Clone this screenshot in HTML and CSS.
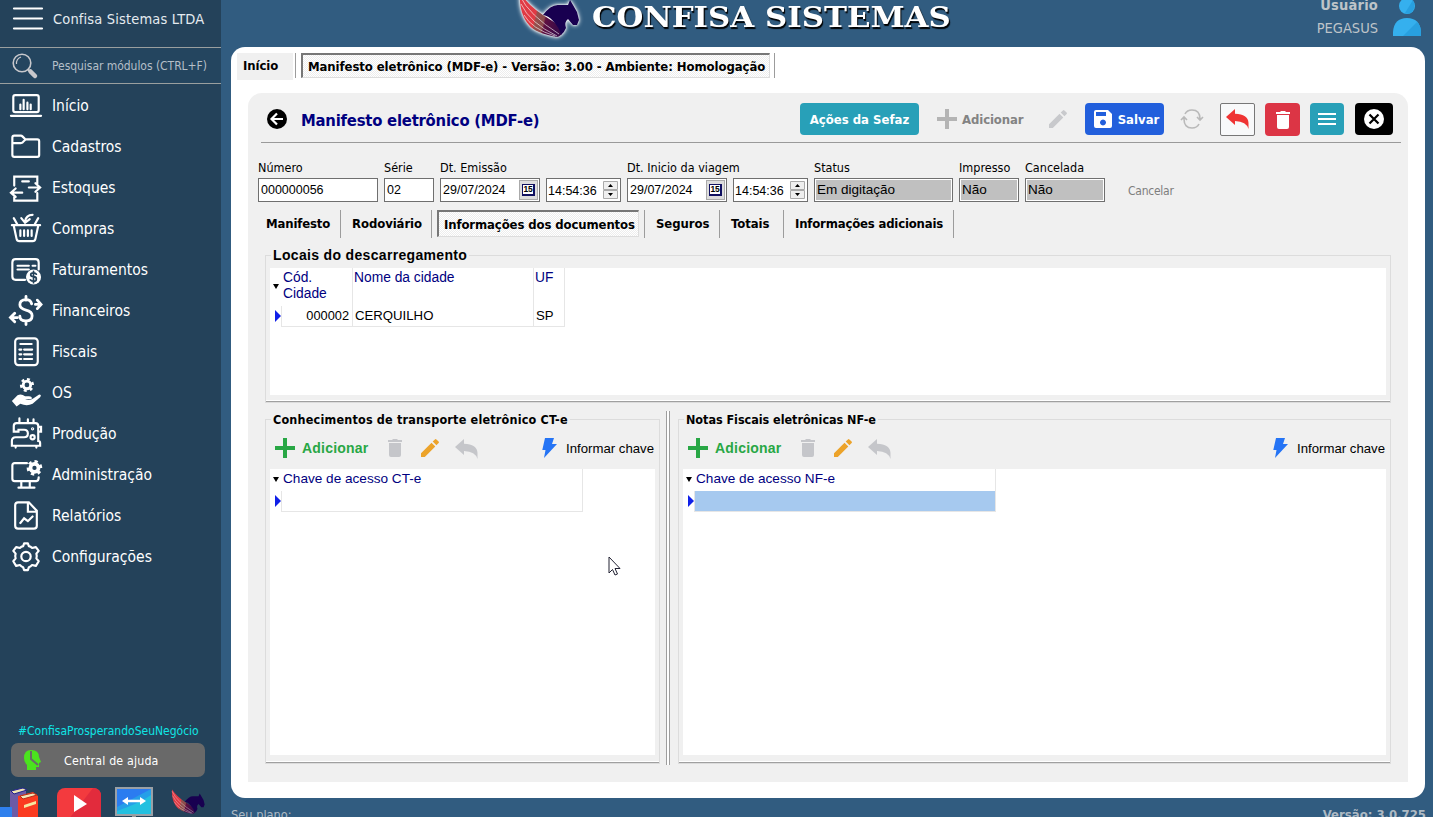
FILE: index.html
```html
<!DOCTYPE html>
<html lang="pt-BR">
<head>
<meta charset="utf-8">
<title>Manifesto eletrônico (MDF-e)</title>
<link rel="stylesheet" href="styles.css">
</head>
<body>
<svg class="defs" aria-hidden="true">
  <linearGradient id="wing" x1="0" y1="0" x2="1" y2=".25">
    <stop offset=".46" stop-color="#e03a44"/><stop offset=".5" stop-color="#94504c"/><stop offset=".68" stop-color="#8a4a4c"/><stop offset=".72" stop-color="#5f1040"/><stop offset="1" stop-color="#3c0a48"/>
  </linearGradient>
  <symbol id="plus" viewBox="0 0 20 20"><path d="M8 0h4v8h8v4h-8v8H8v-8H0V8h8z" fill="currentColor"/></symbol>
  <symbol id="trash" viewBox="0 0 14 18"><path d="M0 1h4l1-1h4l1 1h4v2H0zM1 4h12v12q0 2-2 2H3q-2 0-2-2z" fill="currentColor"/></symbol>
  <symbol id="pencil" viewBox="0 0 18 18"><path d="M0 14.300 10.500 3.700l3.800 3.800L3.800 18H0zM11.700 2.600 13.900.400q.8-.7 1.500 0l2.200 2.200q.7.800 0 1.500l-2.200 2.200z" fill="currentColor"/></symbol>
  <symbol id="undo" viewBox="0 0 23 21"><path d="M0 8 9 0v4.800Q22 5 22.500 14v6q-2-7.500-13.500-8v4z" fill="currentColor"/></symbol>
  <symbol id="bolt" viewBox="0 0 15 20"><path d="M3 0h9L10 6h5L2 20l1.500-8H.3z" fill="currentColor"/></symbol>
  <symbol id="pegasus" viewBox="0 -8 62 47">
    <path d="M3-7C2 8 6 18 12 25q6 8 28 12 4-1 5-4l-5-9-14-9Q12 6 3-7z" fill="url(#wing)"/>
    <path d="M3-4q9 19 39 38M4 4q9 19 36 32M7 15q8 14 31 21" fill="none" stroke="#fff" stroke-width=".7" stroke-opacity=".85"/>
    <path d="M26 15Q34 4 42 5h9l2-5 3 5 4 7 2 8-2 5h-4l-5-6q-4 3-2 9-2 5-5 7-2-8-8-14-4-5-10-6z" fill="#180050"/>
  </symbol>
</svg>
<div class="app">
  <aside class="sidebar">
    <div class="company">
      <svg width="30" height="24" viewBox="0 0 30 24"><path d="M1 1.500h28M1 11.500h28M1 21.500h28" stroke="#fff" stroke-width="2.200" stroke-linecap="round"/></svg>
      <span class="company-name">Confisa Sistemas LTDA</span>
    </div>
    <div class="search">
      <svg width="26" height="26" viewBox="0 0 26 26" fill="none" stroke="#c8c8cc"><circle cx="10" cy="10" r="8.800" stroke-width="1.600"/><path d="M4.500 11Q4 6 9 4" stroke-width="1.200"/><path d="m15.500 16 2 2" stroke-width="2"/><path d="m18.500 18.500 4.500 4.500" stroke-width="4.500" stroke-linecap="round"/></svg>
      <span>Pesquisar módulos (CTRL+F)</span>
    </div>
    <nav class="menu">
      <a class="item"><svg viewBox="0 0 34 32"><rect x="3.500" y="5" width="27" height="18" rx="2"/><path d="M1 27h32" /><path d="M11 15v5M14.500 10v10M18.500 13v7M22 15v5"/></svg><span>Início</span></a>
      <a class="item"><svg viewBox="0 0 34 32"><path d="M2.500 6.500q0-2 2-2h7q1 0 2 1l3 3H29q2 0 2 2V25q0 2-2 2H4.500q-2 0-2-2zM2.500 12.500h9q2 0 3-2l2-2" /></svg><span>Cadastros</span></a>
      <a class="item"><svg viewBox="0 0 34 32"><path d="M4.500 14V4.500H29V12M29 22v8H4.500v-4M13 9.500h7M20 16h11M27 11.500l5 4.500-5 4.500M13 21.500H2M6 17l-5 4.500L6 26"/></svg><span>Estoques</span></a>
      <a class="item"><svg viewBox="0 0 34 32"><path d="M2 12.500h30M4 13l3 14q.5 2.500 3 2.500h14q2.500 0 3-2.500l3-14M11 18v6M15 18v6M19 18v6M23 18v6M4 5l4 7M30 5l-4 7"/><path d="M24 1.500q-7 0-8 7M12 5l4 5 5-4"/></svg><span>Compras</span></a>
      <a class="item"><svg viewBox="0 0 34 32"><path d="M16 27H6q-3.500 0-3.500-3.500v-15Q2.500 5 6 5h21q3.500 0 3.500 3.500V16M8 12h12M24 12h3M8 16h12"/><circle cx="25" cy="24" r="8" class="solid" stroke="none"/><path class="dark" d="M28 21q-1-1.500-3-1.500c-4 0-4 4 0 4s4 5 0 5q-2 0-3.500-1.500M25 18v12"/></svg><span>Faturamentos</span></a>
      <a class="item"><svg viewBox="0 0 34 32"><path stroke-width="3" d="M23 9q-1-4.500-6-4.500-6.500 0-6.500 5.500 0 4 6.500 5.500 6.500 1.500 6.500 6 0 5.500-6.500 5.500T10.500 22M17 1v4M17 27v4"/><path stroke-width="3" d="M27 9.500h5M29 5l4 4.500-4 4.500M8 23.500H2M5 19l-4.500 4.500L5 28"/></svg><span>Financeiros</span></a>
      <a class="item"><svg viewBox="0 0 34 32"><rect x="5.500" y="2" width="24" height="28.500" rx="3.500"/><path d="M11 8h12M10 14h2M15 14h8.500M10 19h2M15 19h8.500M10 24h2M15 24h8.500"/></svg><span>Fiscais</span></a>
      <a class="item"><svg viewBox="0 0 34 32"><circle cx="18" cy="8" r="4" stroke-width="3"/><path class="teeth" stroke-width="3" stroke-dasharray="3 3.280" d="M18 2a6 6 0 1 1-.01 0"/><path class="solid" stroke="none" d="m2 25 6-6q4-2 8 1h4q4 0 3 3h-7q5 2 9-1l6-4q3 0 1 3l-8 7q-6 3-13 0l-4 3z"/></svg><span>OS</span></a>
      <a class="item"><svg viewBox="0 0 34 32"><path d="M4 14V8q0-3 3-3h20q3 0 3 3v16q2 0 2 2v3H2v-5q0-4 4-4h9q4 0 4-4t-4-4H9v2zM10 0v5M19 1v4M25 1v4M30 9h3v5h-3M6 30v1M28 30v1"/><circle cx="24" cy="11" r=".6"/><circle cx="24" cy="20" r="2.200"/></svg><span>Produção</span></a>
      <a class="item"><svg viewBox="0 0 34 32"><path d="M18 4H5Q2.500 4 2.500 6.500v14Q2.500 23 5 23h23q2.500 0 2.500-4M12 23v6M21 23v6M9 30h17"/><circle cx="26" cy="9" r="4.300" stroke-width="4"/><path class="teeth" stroke-width="3" stroke-dasharray="3.500 3.620" d="M26 2.200a6.800 6.800 0 1 1-.01 0"/></svg><span>Administração</span></a>
      <a class="item"><svg viewBox="0 0 34 32"><path d="M5.500 5q0-3 3-3H20l8.500 9v16q0 3-3 3h-17q-3 0-3-3zM19 2v10h9M11 24l4-5 4 3 5-5"/></svg><span>Relatórios</span></a>
      <a class="item"><svg viewBox="0 0 34 32"><circle cx="17" cy="16" r="5"/><path d="m14 5 1-3h4l1 3q2 .5 3.500 2l4-1 3 4-2.500 3q1 3 0 5l2.500 3-3 5-4-1q-1.500 2-3.500 2.500l-1 3h-4l-1-3q-2-.5-3.500-2.500l-4 1-3-5L6 18q-1-2 0-5l-2.500-3 3-4 4 1Q12 5.500 14 5z" stroke-linejoin="round"/></svg><span>Configurações</span></a>
    </nav>
    <div class="slogan">#ConfisaProsperandoSeuNegócio</div>
    <div class="help"><svg width="19" height="20" viewBox="0 0 19 20"><path d="M8 0Q1 0 1 8q0 4 3 7v5h9v-3h3v-4l2-1-2-5Q16 0 8 0z" fill="#4be31e"/><path d="M8 1v8l7 6" fill="none" stroke="#696969" stroke-width="2"/></svg><span>Central de ajuda</span></div>
    <div class="dock">
      <svg class="books" width="38" height="30" viewBox="0 0 38 30"><path d="m10 4 12-3 4 2v27H10z" fill="#6d5aa5"/><path d="m11 4 12-3 4 2-13 4z" fill="#f0e3b2" stroke="#20208c"/><path d="M18 9 33 5l5 4v21H18z" fill="#fb3b20"/><path d="m20 9 13-3 4 2-14 4z" fill="#f2e8b8" stroke="#b52e18"/><path d="m24 18 12-4v3l-12 4z" fill="#f6e7a0"/><path d="M0 20h12v10H0z" fill="#2f80ed"/></svg>
      <svg class="tube" width="44" height="30" viewBox="0 0 44 30"><rect y="1" width="44" height="36" rx="8" fill="#f33a3e"/><path d="M44 37V9q0-8-8-8L8 37z" fill="#e22b3c"/><path d="M17 8v17l13-8z" fill="#fff"/></svg>
      <svg class="remote" width="38" height="30" viewBox="0 0 38 30"><rect x="1" y="1" width="36" height="27" fill="#269fe8" stroke="#9aa0a6" stroke-width="2"/><path d="M2 2h34L2 20z" fill="#2b7cf0"/><path d="M2 24Q25 16 36 8v19H2z" fill="#23c0e0"/><path d="M17 28h4v2h-4z" fill="#999"/><path d="M12 14h14" stroke="#fff" stroke-width="2.500"/><path d="m7 14 6-4v8zM31 14l-6-4v8z" fill="#fff"/></svg>
      <svg class="pega" width="35" height="26"><use href="#pegasus"/></svg>
    </div>
  </aside>
  <main class="main">
    <header class="top">
      <div class="brand"><svg class="brand-mark" width="62" height="47"><use href="#pegasus"/></svg><span>CONFISA SISTEMAS</span></div>
      <div class="user">
        <div class="user-text"><b>Usuário</b><span>PEGASUS</span></div>
        <svg width="28" height="37" viewBox="0 0 28 37"><circle cx="14" cy="6" r="8" fill="#35b0ee"/><path d="M20 0q3 7-1 12-3 3-7 1z" fill="#28a0e0"/><path d="M0 36V32Q1 18 14 18t14 14v4z" fill="#35b0ee"/><path d="M24 22q4 4 4 10v4H10z" fill="#28a0e0"/></svg>
      </div>
    </header>
    <section class="window">
      <div class="tabs window-tabs">
        <span class="tab home">Início</span><i class="sep"></i><span class="tab active doc">Manifesto eletrônico (MDF-e) - Versão: 3.00 - Ambiente: Homologação</span><i class="sep"></i>
      </div>
      <div class="page">
        <div class="titlebar">
          <svg class="back" width="20" height="20" viewBox="0 0 20 20"><circle cx="10" cy="10" r="10"/><path d="M16 10H5M10 4.500 4.500 10l5.500 5.500" fill="none" stroke="#fff" stroke-width="2.200"/></svg>
          <h1>Manifesto eletrônico (MDF-e)</h1>
          <div class="actions">
            <button class="btn sefaz">Ações da Sefaz</button>
            <span class="add off"><svg width="20" height="20"><use href="#plus"/></svg><b>Adicionar</b></span>
            <svg class="edit-off" width="18" height="18"><use href="#pencil"/></svg>
            <button class="btn save"><svg width="18" height="18" viewBox="0 0 18 18"><path fill="#fff" fill-rule="evenodd" d="M2 0h12l4 4v12q0 2-2 2H2q-2 0-2-2V2q0-2 2-2zm0 2v4h10V2zm7 7.500a3 3 0 1 0 .01 0z"/></svg><b>Salvar</b></button>
            <svg class="refresh" width="22" height="20" viewBox="0 0 22 20" fill="none" stroke="#b9b9b9" stroke-width="1.600"><path d="M4 5q2-4 7-4 8 0 8 9M18 15q-2 4-7 4-8 0-8-9M0 11l3-3 3 3M16 8l3 3 3-3"/></svg>
            <button class="btn undo"><svg width="23" height="21"><use href="#undo"/></svg></button>
            <button class="btn del"><svg width="14" height="18"><use href="#trash"/></svg></button>
            <button class="btn more"><svg width="18" height="12" viewBox="0 0 18 12"><path d="M0 1h18M0 6h18M0 11h18" stroke="#fff" stroke-width="2"/></svg></button>
            <button class="btn close"><svg width="20" height="20" viewBox="0 0 20 20"><circle cx="10" cy="10" r="10" fill="#fff"/><path d="m5.500 5.500 9 9m0-9-9 9" stroke="#000" stroke-width="2.200"/></svg></button>
          </div>
        </div>
        <div class="form">
          <label class="w120">Número<span class="in">000000056</span></label>
          <label class="w50">Série<span class="in">02</span></label>
          <label class="w100">Dt. Emissão<span class="in">29/07/2024<i class="cal"><b>15</b></i></span></label>
          <label class="w75"><span class="in time">14:54:36<i class="spin"><svg width="15" height="18" viewBox="0 0 15 18"><path d="M.5.500h14v8H.5zM.5 9.500h14v8H.5z" fill="#efefef" stroke="#aaa"/><path d="m5 6 2.500-3L10 6zM5 12h5l-2.500 3z"/></svg></i></span></label>
          <label class="w100 nowrap">Dt. Inicio da viagem<span class="in">29/07/2024<i class="cal"><b>15</b></i></span></label>
          <label class="w75"><span class="in time">14:54:36<i class="spin"><svg width="15" height="18" viewBox="0 0 15 18"><path d="M.5.500h14v8H.5zM.5 9.500h14v8H.5z" fill="#efefef" stroke="#aaa"/><path d="m5 6 2.500-3L10 6zM5 12h5l-2.500 3z"/></svg></i></span></label>
          <label class="w140">Status<span class="in ro">Em digitação</span></label>
          <label class="w60">Impresso<span class="in ro">Não</span></label>
          <label class="w80">Cancelada<span class="in ro">Não</span></label>
          <span class="cancel">Cancelar</span>
        </div>
        <div class="tabs sub">
          <span class="tab t1">Manifesto</span><i class="sep"></i><span class="tab t2">Rodoviário</span><i class="sep"></i><span class="tab active t3">Informações dos documentos</span><i class="sep"></i><span class="tab t4">Seguros</span><i class="sep"></i><span class="tab t5">Totais</span><i class="sep"></i><span class="tab t6">Informações adicionais</span><i class="sep"></i>
        </div>
        <section class="group places">
          <h2 class="sans">Locais do descarregamento</h2>
          <div class="grid-area">
            <div class="row head"><i class="mark"></i><span class="c1">Cód.<br>Cidade</span><span class="c2">Nome da cidade</span><span class="c3">UF</span></div>
            <div class="row body"><i class="ptr"></i><span class="c1">000002</span><span class="c2">CERQUILHO</span><span class="c3">SP</span></div>
          </div>
        </section>
        <div class="split">
          <section class="group cte">
            <h2>Conhecimentos de transporte eletrônico CT-e</h2>
            <div class="tools">
              <span class="add"><svg width="20" height="20"><use href="#plus"/></svg><b>Adicionar</b></span>
              <svg class="t-del" width="14" height="18"><use href="#trash"/></svg>
              <svg class="t-edit" width="18" height="18"><use href="#pencil"/></svg>
              <svg class="t-undo" width="23" height="21"><use href="#undo"/></svg>
              <span class="key"><svg width="15" height="20"><use href="#bolt"/></svg>Informar chave</span>
            </div>
            <div class="grid-area">
              <div class="row khead"><i class="mark"></i><span>Chave de acesso CT-e</span></div>
              <div class="row kbody"><i class="ptr"></i><span></span></div>
            </div>
          </section>
          <div class="splitter"></div>
          <section class="group nfe">
            <h2>Notas Fiscais eletrônicas NF-e</h2>
            <div class="tools">
              <span class="add"><svg width="20" height="20"><use href="#plus"/></svg><b>Adicionar</b></span>
              <svg class="t-del" width="14" height="18"><use href="#trash"/></svg>
              <svg class="t-edit" width="18" height="18"><use href="#pencil"/></svg>
              <svg class="t-undo" width="23" height="21"><use href="#undo"/></svg>
              <span class="key"><svg width="15" height="20"><use href="#bolt"/></svg>Informar chave</span>
            </div>
            <div class="grid-area">
              <div class="row khead"><i class="mark"></i><span>Chave de acesso NF-e</span></div>
              <div class="row kbody selected"><i class="ptr"></i><span></span></div>
            </div>
          </section>
        </div>
      </div>
    </section>
    <footer class="foot"><span>Seu plano:</span><b>Versão: 3.0.725</b></footer>
  </main>
</div>
<svg class="cursor" width="13" height="20" viewBox="0 0 13 20"><path d="M1 1v16l3.500-3.500L7 19l2.500-1-2.500-5.500h5z" fill="#fff" stroke="#223" stroke-width="1"/></svg>
</body>
</html>
```
FILE: styles.css
```css
* { box-sizing: border-box; }
body { margin: 0; width: 1433px; height: 817px; overflow: hidden; font: 12.5px "DejaVu Sans Condensed", "DejaVu Sans", sans-serif; color: #000; }
svg { display: block; flex: none; overflow: visible; }
i { font-style: normal; }
.defs { position: absolute; width: 0; height: 0; }
.app { display: flex; width: 1433px; height: 817px; }

.sidebar { width: 221px; flex: none; background: #24425a; display: flex; flex-direction: column; color: #fff; overflow: hidden; white-space: nowrap; }
.sidebar > * { flex: none; }
.company { height: 48px; border-bottom: 1px solid #9a9f9f; display: flex; align-items: center; padding: 0 0 10px 13px; gap: 10px; color: #e4ebf0; font-size: 14.5px; letter-spacing: .16px; }
.search { height: 36px; border-bottom: 1px solid #9a9f9f; background: #24455f; display: flex; align-items: center; padding-left: 12px; gap: 14px; color: #b5bfc8; font-size: 12px; letter-spacing: -.04px; }
.menu { display: flex; flex-direction: column; }
.item { height: 41px; display: flex; align-items: center; gap: 10px; padding-left: 10px; font-size: 15.500px; padding-top: 1px; }
.item span { padding-top: 1px; }
.item svg { width: 32px; height: 31px; fill: none; stroke: #fff; stroke-width: 2.300; stroke-linecap: round; }
.item .solid { fill: #fff; }
.item .teeth { stroke-linecap: butt; }
.item .dark { stroke: #24425a; stroke-width: 1.800; }
.slogan { margin: 143px 0 0 18px; height: 24px; line-height: 25px; color: #10e5e5; font-size: 12px; }
.help { margin: 0 0 0 11px; width: 194px; height: 34px; border-radius: 7px; background: #696969; display: flex; align-items: center; padding-left: 12px; gap: 22px; font-size: 12.3px; letter-spacing: .17px; }
.help span { padding-top: 1px; }
.dock { display: flex; margin-top: 10px; height: 30px; }
.tube { margin-left: 19px; }
.remote { margin-left: 14px; }
.pega { margin: 2px 0 0 17px; }

.main { flex: 1; background: #315c80; display: flex; flex-direction: column; padding: 0 8px 0 10px; }
.top { height: 47px; flex: none; display: flex; padding-left: 286px; justify-content: space-between; overflow: hidden; }
.brand { display: flex; gap: 13px; color: #fff; font: bold 28px/36px "DejaVu Serif", serif; white-space: nowrap; text-shadow: 1px 2px 1px #000; }
.brand span { transform: scaleX(1.102); transform-origin: 0 0; }
.brand-mark { margin-top: -8px; filter: drop-shadow(0 0 1px #fff) drop-shadow(0 0 2px #fff); }
.user { display: flex; gap: 15px; padding-right: 4px; color: #bec4c9; }
.user-text { display: flex; flex-direction: column; align-items: flex-end; font-size: 14.5px; line-height: 23px; margin-top: -6px; }
.user-text b { letter-spacing: .2px; }
.window { height: 751px; flex: none; background: #fff; border-radius: 14px; padding: 6px 17px 0 6px; }
.tabs { display: flex; font-weight: bold; font-size: 13px; letter-spacing: -.08px; white-space: nowrap; }
.tab { flex: none; }
.sep { width: 1px; background: #9c9c9c; flex: none; }
.active { background: repeating-conic-gradient(#fff 0 25%, #ededed 0 50%) 0 0/2px 2px padding-box; border: solid; border-width: 2px 1px 1px 2px; border-color: #777 #ddd #ddd #777; }
.window-tabs { height: 40px; }
.window-tabs .sep { height: 25px; }
.home { width: 56px; height: 27px; background: #f0f0f0; padding-left: 6px; line-height: 26px; margin-right: 2px; }
.doc { width: 469px; height: 25px; margin: 0 4px 0 5px; line-height: 23px; padding-left: 5px; }
.page { margin-left: 11px; width: 1160px; height: 689px; background: #f0f0f0; border-radius: 14px 14px 0 0; padding: 0 17px 0 10px; }
.titlebar { height: 50px; margin: 0 -10px 0 3px; border-bottom: 1px solid #9a9a9a; display: flex; padding-top: 10px; }
.back { margin: 6px 0 0 6px; }
h1 { margin: 0 0 0 14px; font-size: 16.500px; letter-spacing: -.22px; line-height: 35px; color: #000080; width: 499px; white-space: nowrap; }
.actions { display: flex; align-items: flex-start; }
.btn { border: 0; padding: 0; border-radius: 4px; height: 32px; display: flex; align-items: center; justify-content: center; color: #fff; font: bold 13px "DejaVu Sans Condensed", sans-serif; white-space: nowrap; }
.sefaz { width: 119px; background: #28a0b8; }
.add { display: flex; align-items: center; height: 32px; margin-left: 18px; gap: 5px; width: 86px; color: #28a745; }
.off { color: #b4b4b4; }
.off b { color: #838383; font-size: 13px; letter-spacing: -.1px; }
.edit-off { margin: 7px 0 0 26px; color: #c8c9cc; }
.save { width: 79px; background: #225fdc; margin-left: 18px; gap: 6px; padding-left: 4px; }
.refresh { margin: 6px 0 0 17px; }
.undo { width: 35px; height: 33px; border: 1px solid #777; background: #f8f9fa; color: #ef3434; margin-left: 17px; border-radius: 2px; }
.del { width: 35px; height: 33px; background: #dc3545; margin-left: 10px; }
.more { width: 34px; background: #28a0b8; margin-left: 10px; }
.close { width: 38px; background: #000; margin-left: 11px; }
.form { display: flex; gap: 6px; height: 60px; padding-top: 17px; }
.form label { display: flex; flex-direction: column; justify-content: flex-end; height: 42px; line-height: 16px; white-space: nowrap; gap: 2px; }
.w120 { width: 120px; } .w50 { width: 50px; } .w100 { width: 100px; } .w75 { width: 75px; } .w140 { width: 139px; } .w60 { width: 60px; } .w80 { width: 80px; }
.in { height: 24px; border: 1px solid #6f6f6f; background: #fff; font: 12.500px/22px "Liberation Sans", sans-serif; padding-left: 2px; display: flex; justify-content: space-between; }
.time { line-height: 24px; padding-left: 1px; }
.ro { background: #c0c0c0; box-shadow: inset 0 0 0 1px #fff; font-size: 13.500px; }
.cal { width: 19px; height: 20px; margin: 1px; background: #ddd; border: 1px solid #aaa; display: flex; align-items: center; justify-content: center; }
.cal b { border: solid #101060; border-width: 1px 2px 2px 1px; background: #fff; width: 13px; height: 12px; font: bold 8.5px/9px "Liberation Sans", sans-serif; letter-spacing: -.3px; text-align: center; }
.spin { margin: 2px; }
.cancel { color: #7e7e7e; font-size: 12px; letter-spacing: -.25px; margin: 23px 0 0 17px; line-height: 16px; }
.sub { height: 52px; padding-top: 7px; }
.sub .sep { height: 28px; }
.sub .tab { height: 28px; line-height: 28px; }
.sub .t1 { width: 82px; padding-left: 8px; letter-spacing: -.16px; }
.t2 { width: 90px; padding-left: 11px; }
.sub .t3 { width: 202px; height: 27px; line-height: 25px; margin: 0 5px; padding-left: 5px; letter-spacing: -.11px; }
.t4 { width: 74px; padding-left: 11px; }
.t5 { width: 63px; padding-left: 11px; }
.sub .t6 { width: 169px; padding-left: 11px; letter-spacing: -.18px; }
.group { border: 1px solid #dcdcdc; box-shadow: inset 0 -1px #a0a0a0, inset 0 -2px #fff; position: relative; margin-left: 7px; }
h2 { position: absolute; left: 5px; top: -9px; margin: 0; padding: 0 2px; background: #f0f0f0; font-size: 12.500px; line-height: 17px; white-space: nowrap; }
.cte h2 { letter-spacing: .19px; }
.nfe h2 { letter-spacing: -.04px; }
h2.sans { font: bold 14px/17px "Liberation Sans", sans-serif; letter-spacing: .33px; }
.places { height: 148px; padding: 12px 4px 0 4px; }
.grid-area { background: #fff; font: 13.8px "Liberation Sans", sans-serif; }
.places .grid-area { height: 127px; }
.row { display: flex; }
.mark { width: 12px; height: 6px; margin-top: 16px; background: #000; clip-path: polygon(3px 0, 9px 0, 6px 5px); }
.ptr { width: 11px; height: 12px; margin-top: 4px; background: #1020e8; clip-path: polygon(5px 0, 11px 6px, 5px 12px); }
.row span { border-right: 1px solid #e6e6e6; }
.head, .khead { color: #000080; }
.head span { height: 38px; line-height: 16px; padding: 2px 1px; }
.head .c1 { width: 71px; }
.c2 { width: 181px; }
.c3 { width: 31px; }
.body span { height: 21px; line-height: 20px; border-bottom: 1px solid #e6e6e6; padding-left: 2px; font-size: 13.2px; }
.body .c1 { border-left: 1px solid #e6e6e6; width: 72px; text-align: right; padding-right: 3px; font-size: 12.8px; }
.split { display: flex; margin-top: 16px; }
.cte { width: 395px; height: 345px; padding: 0 4px; }
.nfe { width: 713px; height: 345px; padding: 0 4px; margin-left: 8px; }
.splitter { width: 4px; margin: -8px 0 0 6px; height: 354px; border: solid #9e9e9e; border-width: 0 1px; background: #fff; }
.tools { display: flex; height: 49px; padding-top: 12px; align-items: flex-start; color: #c5c6ca; }
.tools .add { margin-left: 5px; gap: 7px; width: 100px; }
.tools .add b { font: bold 14px "Liberation Sans", sans-serif; letter-spacing: .2px; }
.t-del { margin: 7px 0 0 13px; }
.t-edit { margin: 7px 0 0 19px; color: #eca32a; }
.t-undo { margin: 7px 0 0 16px; }
.key { margin: 0 1px 0 auto; height: 32px; display: flex; align-items: center; gap: 9px; color: #000; font: 13.200px "Liberation Sans", sans-serif; white-space: nowrap; }
.key svg { color: #2574f5; }
.cte .grid-area, .nfe .grid-area { height: 286px; font-size: 13.600px; }
.khead span { width: 301px; height: 22px; padding-left: 1px; line-height: 19px; }
.khead .mark { margin-top: 8px; }
.kbody span { width: 302px; height: 21px; border: 1px solid #e6e6e6; border-top: 0; }
.selected span { background: #a6c9ef; }
.foot { display: flex; justify-content: space-between; line-height: 16px; padding-top: 9px; color: #aebac4; font-size: 12.700px; }
.foot b { font-size: 13px; margin-right: -1px; }
.cursor { position: absolute; left: 608px; top: 556px; }
```
